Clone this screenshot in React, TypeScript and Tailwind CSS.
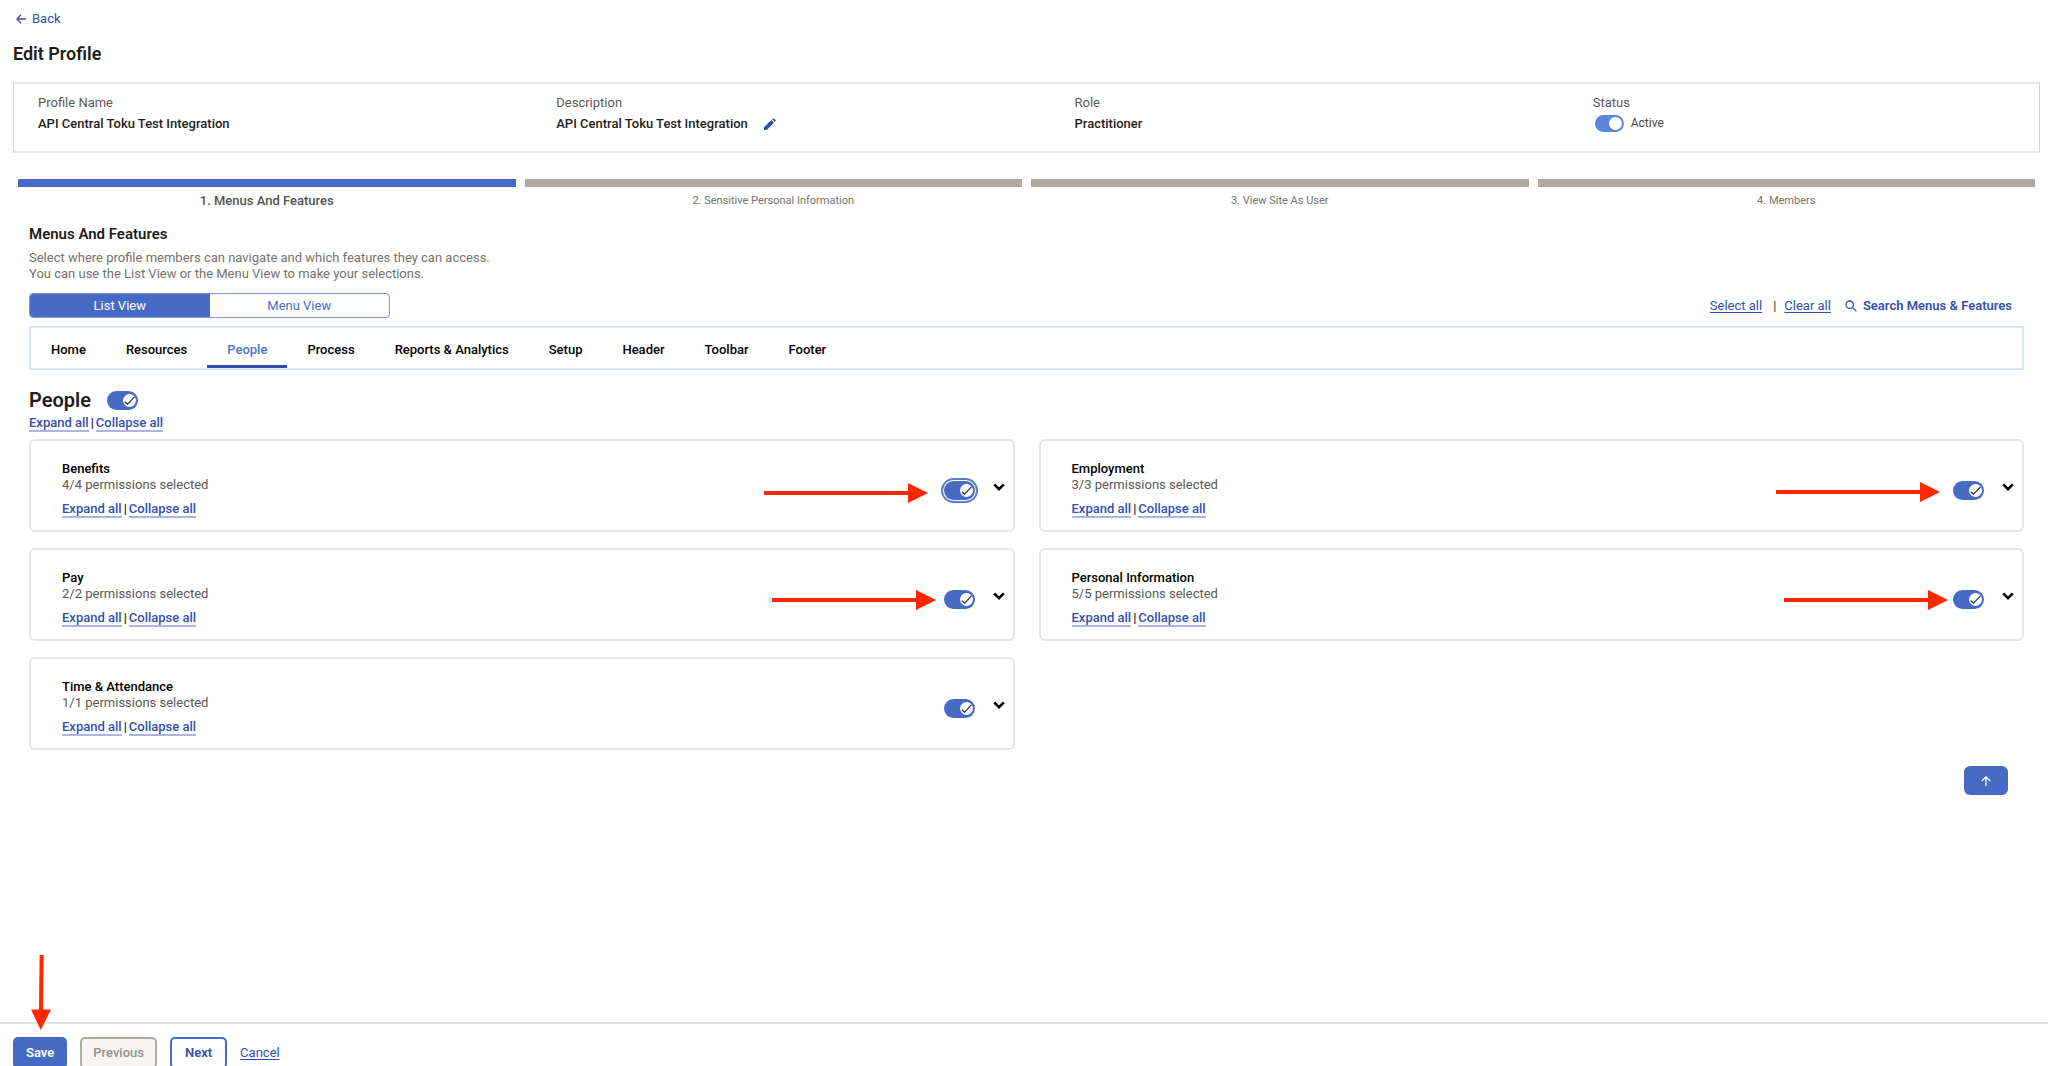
import type { ReactNode } from "react";

type Group = {
  name: string;
  granted: number;
  focused?: boolean;
  pointer?: string;
};

const groups: Group[] = [
  { name: "Benefits", granted: 4, focused: true, pointer: "right-[85px] top-[42px]" },
  { name: "Employment", granted: 3, pointer: "right-[82px] top-[41px]" },
  { name: "Pay", granted: 2, pointer: "right-[77px] top-10" },
  { name: "Personal Information", granted: 5, pointer: "right-[74px] top-10" },
  { name: "Time & Attendance", granted: 1 },
];

const tabs = [
  "Home",
  "Resources",
  "People",
  "Process",
  "Reports & Analytics",
  "Setup",
  "Header",
  "Toolbar",
  "Footer",
];

const steps = [
  "1. Menus And Features",
  "2. Sensitive Personal Information",
  "3. View Site As User",
  "4. Members",
];

function Field({ label, children }: { label: string; children: ReactNode }) {
  return (
    <div>
      <dt className="text-[#5c5855]">{label}</dt>
      <dd className="mt-[5px] flex h-4 items-center font-medium text-[#1f1d1c]">{children}</dd>
    </div>
  );
}

function CheckSwitch({ label, focused }: { label: string; focused?: boolean }) {
  return (
    <label
      className={
        focused
          ? "relative block h-[19px] w-[31px] cursor-pointer rounded-full outline-2 outline-offset-1 outline-[#5d7ccb]"
          : "relative block h-[19px] w-[31px] cursor-pointer rounded-full"
      }
    >
      <input type="checkbox" role="switch" defaultChecked className="peer sr-only" aria-label={label} />
      <span className="flex h-[19px] items-center rounded-full bg-[#b0aaa4] pl-4 peer-checked:bg-[#476bc4]">
        <span className="flex size-[13px] items-center justify-center rounded-full bg-white">
          <svg viewBox="0 0 12 12" className="size-[13px]" fill="none" stroke="#33302e" strokeWidth="1.1">
            <path d="M1.6 7.2 4.2 9.3 10.6 2.6" />
          </svg>
        </span>
      </span>
    </label>
  );
}

function ExpandLinks() {
  const link = "block border-b-2 border-[#a9b6e0] leading-[14px] font-medium text-[#3450ae]";
  return (
    <div className="flex leading-[14px]">
      <a href="#expand" className={link}>
        Expand all
      </a>
      <span className="px-0.5 text-black">|</span>
      <a href="#collapse" className={link}>
        Collapse all
      </a>
    </div>
  );
}

function RightArrow({ className }: { className: string }) {
  return (
    <svg
      viewBox="0 0 164 20"
      className={"pointer-events-none absolute h-5 w-[164px] " + className}
      fill="#ff2600"
      aria-hidden="true"
    >
      <path d="M0 8H144V0L164 10L144 20V12H0Z" />
    </svg>
  );
}

function GroupCard({ group }: { group: Group }) {
  return (
    <section className="relative flex justify-between rounded-md border-2 border-[#e8e5e0] pr-2 pb-3 pl-[31px]">
      <div className="pt-5">
        <h3 className="font-medium text-black">{group.name}</h3>
        <p className="mb-[9px] text-[#5c5855]">
          {group.granted}/{group.granted} permissions selected
        </p>
        <ExpandLinks />
      </div>
      <div className="flex items-start gap-[18px] pt-10">
        <CheckSwitch label={group.name} focused={group.focused} />
        <button type="button" aria-label={"Show " + group.name}>
          <svg viewBox="0 0 12 12" className="size-3" fill="none" stroke="#000" strokeWidth="2.6">
            <path d="M1.2 3.4 6 8.2 10.8 3.4" />
          </svg>
        </button>
      </div>
      {group.pointer && <RightArrow className={group.pointer} />}
    </section>
  );
}

export default function App() {
  return (
    <div className="flex min-h-screen flex-col bg-white font-['Roboto','Liberation_Sans',sans-serif] text-[13px] leading-4 text-[#1f1d1c]">
      <main className="flex-1 pt-[11px] pr-2 pl-[13px]">
        <a href="#back" className="flex w-fit items-center gap-1.5 pl-[3px] text-[#3450ae]">
          <svg viewBox="0 0 10 10" className="size-2.5" fill="none" stroke="currentColor" strokeWidth="1.3">
            <path d="M10 5H1M5 .8 .9 5 5 9.2" />
          </svg>
          Back
        </a>
        <h1 className="mt-[15px] text-lg leading-6 font-semibold">Edit Profile</h1>

        <dl className="mt-4 grid grid-cols-4 gap-x-24 border-x border-y-2 border-x-[#d0d0d0] border-y-[#e8e8e8] px-6 pt-[11px] pb-[19px]">
          <Field label="Profile Name">API Central Toku Test Integration</Field>
          <Field label="Description">
            API Central Toku Test Integration
            <button type="button" aria-label="Edit description" className="ml-4">
              <svg viewBox="0 0 12 12" className="size-3" fill="#2f4cac">
                <path d="M0 9.3 7.3 2 10 4.7 2.7 12H.9Q0 12 0 11.1ZM8.1 1.2 8.9.4Q9.4 0 9.9.4L11.6 2.1Q12 2.6 11.6 3.1L10.8 3.9Z" />
              </svg>
            </button>
          </Field>
          <Field label="Role">Practitioner</Field>
          <Field label="Status">
            <label className="relative mb-0.5 flex items-center gap-[7px] pl-0.5 text-xs font-normal text-[#4a4643]">
              <input type="checkbox" role="switch" defaultChecked className="peer sr-only" />
              <span className="flex h-[17px] w-[29px] items-center rounded-full bg-[#b0aaa4] pl-3.5 peer-checked:bg-[#5c86da]">
                <span className="size-[13px] rounded-full bg-white" />
              </span>
              Active
            </label>
          </Field>
        </dl>

        <ol className="mt-[26px] grid grid-cols-4 gap-x-[9px] px-[5px] text-center">
          {steps.map((step, i) => (
            <li key={step}>
              <div className={i === 0 ? "h-2 bg-[#476bc4]" : "h-2 bg-[#afa9a3]"} />
              <p className={i === 0 ? "mt-1.5 font-medium text-[#56524f]" : "mt-1.5 text-[11px] text-[#76716d]"}>
                {step}
              </p>
            </li>
          ))}
        </ol>

        <div className="px-4">
          <h2 className="mt-[15px] text-[15px] leading-5 font-semibold">Menus And Features</h2>
          <p className="mt-1.5 text-[#76716d]">
            Select where profile members can navigate and which features they can access.
            <br />
            You can use the List View or the Menu View to make your selections.
          </p>

          <div className="mt-[11px] flex items-center justify-between">
            <div className="flex h-[25px] w-[361px] overflow-hidden rounded border border-[#7d98d8] text-[#476bc4]">
              <button type="button" className="flex-1 bg-[#476bc4] text-white">
                List View
              </button>
              <button type="button" className="flex-1">
                Menu View
              </button>
            </div>
            <div className="flex items-center pr-3 text-[#3450ae]">
              <a href="#select" className="underline underline-offset-2">
                Select all
              </a>
              <span className="pr-2 pl-[11px] text-[#33302e]">|</span>
              <a href="#clear" className="underline underline-offset-2">
                Clear all
              </a>
              <button type="button" className="ml-3.5 flex items-center gap-1.5 font-semibold">
                <svg viewBox="0 0 12 12" className="size-3" fill="none" stroke="currentColor" strokeWidth="1.3">
                  <circle cx="4.7" cy="4.7" r="3.7" />
                  <path d="M7.4 7.4 11.4 11.4" />
                </svg>
                Search Menus &amp; Features
              </button>
            </div>
          </div>

          <nav className="mt-2 flex border-2 border-[#d9e5f8] font-medium text-black">
            {tabs.map((tab) => (
              <a
                key={tab}
                href={"#" + tab}
                className={
                  tab === "People"
                    ? "flex h-10 items-center border-b-3 border-[#2f4cac] px-5 pt-1.5 text-[#4f73cb]"
                    : "flex h-10 items-center border-b-3 border-transparent px-5 pt-1.5"
                }
              >
                {tab}
              </a>
            ))}
          </nav>

          <div className="mt-4 mb-0.5 flex items-center gap-4">
            <h2 className="text-xl leading-7 font-semibold">People</h2>
            <CheckSwitch label="People" />
          </div>
          <ExpandLinks />

          <div className="mt-[7px] grid grid-cols-2 gap-x-6 gap-y-4">
            {groups.map((group) => (
              <GroupCard key={group.name} group={group} />
            ))}
          </div>

          <div className="mt-4 flex justify-end pr-4">
            <button
              type="button"
              aria-label="Back to top"
              className="flex h-[29px] w-11 items-center justify-center rounded-md bg-[#476bc4] text-white"
            >
              <svg viewBox="0 0 10 10" className="size-2.5" fill="none" stroke="currentColor" strokeWidth="1.2">
                <path d="M5 10V1M.8 5 5 .8 9.2 5" />
              </svg>
            </button>
          </div>
        </div>
      </main>

      <footer className="relative border-t-2 border-[#e2e2dd]">
        <div className="flex h-[42px] items-start gap-[13px] overflow-hidden pt-[13px] pl-[13px] font-medium">
          <button type="button" className="h-8 shrink-0 rounded-[5px] bg-[#476bc4] px-[13px] font-semibold text-white">
            Save
          </button>
          <button
            type="button"
            disabled
            className="h-8 shrink-0 rounded-[5px] border-2 border-[#b0aaa4] bg-[#f7f5f3] px-[11px] text-[#989189]"
          >
            Previous
          </button>
          <button
            type="button"
            className="h-8 shrink-0 rounded-[5px] border-2 border-[#476bc4] px-[13px] font-semibold text-[#3450ae]"
          >
            Next
          </button>
          <a href="#cancel" className="flex h-8 items-center font-normal text-[#3450ae] underline underline-offset-2">
            Cancel
          </a>
        </div>
        <svg
          viewBox="0 0 20 75"
          className="pointer-events-none absolute bottom-9 left-[31px] h-[75px] w-5"
          fill="#ff2600"
          aria-hidden="true"
        >
          <path d="M8.6 0H12.6L12 54.5H20L9.7 75L0 54.5H8Z" />
        </svg>
      </footer>
    </div>
  );
}
